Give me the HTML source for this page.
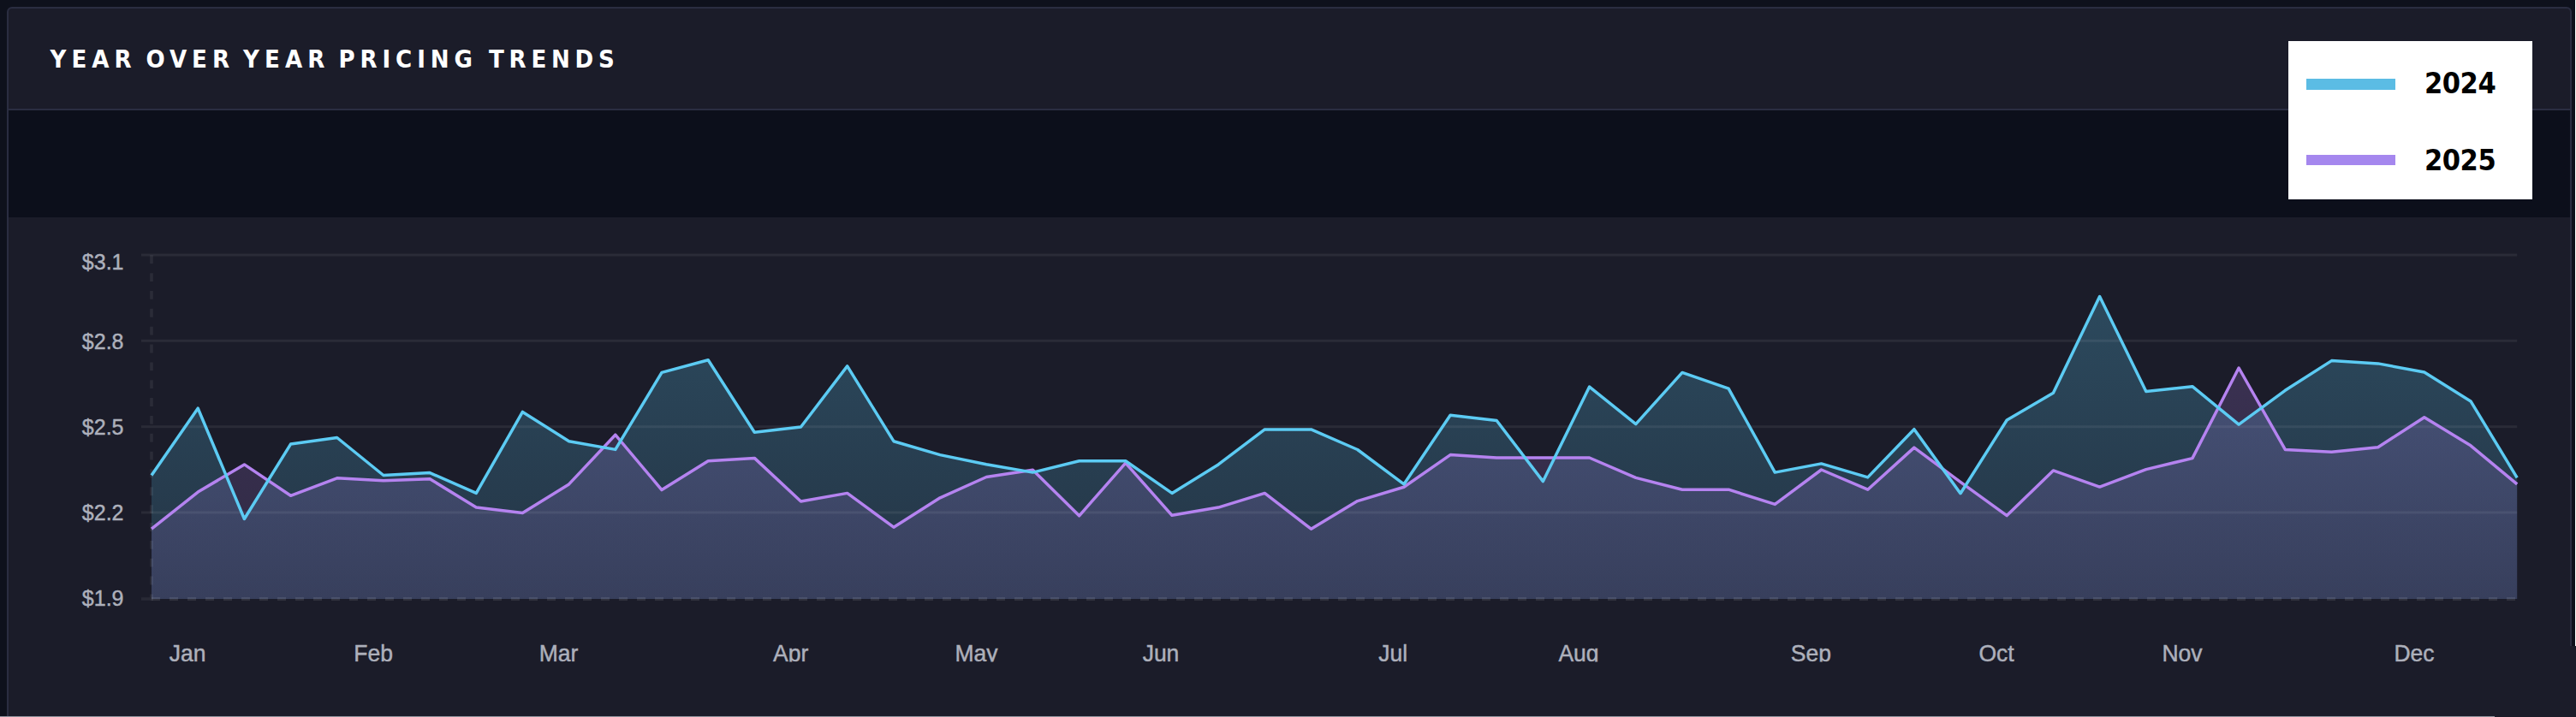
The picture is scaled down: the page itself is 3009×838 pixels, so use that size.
<!DOCTYPE html>
<html><head><meta charset="utf-8"><title>Year Over Year Pricing Trends</title>
<style>
html,body{margin:0;padding:0}
body{width:3009px;height:838px;overflow:hidden;background:#0e111c;position:relative;font-family:"Liberation Sans",sans-serif}
.card{position:absolute;left:8px;top:8px;width:2992px;height:840px;border:2px solid #2a2d41;border-radius:6px 6px 0 0;background:#1b1c29}
.hline{position:absolute;left:10px;top:127px;width:2992px;height:2px;background:#2a2d41}
.band{position:absolute;left:10px;top:129px;width:2992px;height:125px;background:#0c0f1b}
.title{position:absolute;left:0;top:51px;margin:0;width:800px;height:36px;font:bold 29px/36px "DejaVu Sans Condensed","DejaVu Sans","Liberation Sans",sans-serif;color:#fff;white-space:nowrap}
.title span{position:absolute;top:0}
.chart{position:absolute;left:0;top:0}
.yl{font:25px "Liberation Sans",sans-serif;fill:#adb0bb;stroke:#adb0bb;stroke-width:0.45px}
.xl{font:26.5px "Liberation Sans",sans-serif;fill:#adb0bb;stroke:#adb0bb;stroke-width:0.45px}
.legend{position:absolute;left:2673px;top:48px;width:285px;height:185px;background:#fff}
.legend .bar{position:absolute;left:21px;width:103.6px;height:12.5px}
.legend .lb{position:absolute;left:158.9px;font:bold 34px/40px "DejaVu Sans Condensed","Liberation Sans",sans-serif;color:#000;letter-spacing:-0.45px}
.rwhite{position:absolute;left:3008px;top:0;width:1px;height:755px;background:#fff}
.patch{position:absolute;left:2914px;top:755px;width:95px;height:83px;background:#1b1c29}
.bline{position:absolute;left:0;top:837px;width:2914px;height:1px;background:#8f929c}
</style></head><body>
<div class="card"></div>
<div class="hline"></div>
<div class="band"></div>
<h1 class="title"><span style="left:58.5px;letter-spacing:6.07px">YEAR</span> <span style="left:170.5px;letter-spacing:6px">OVER</span> <span style="left:284px;letter-spacing:6.13px">YEAR</span> <span style="left:395.5px;letter-spacing:5.9px">PRICING</span> <span style="left:571px;letter-spacing:5.76px">TRENDS</span></h1>
<svg class="chart" width="3009" height="838" viewBox="0 0 3009 838">
<defs><linearGradient id="gb" gradientUnits="userSpaceOnUse" x1="0" y1="298" x2="0" y2="700"><stop offset="0" stop-color="#5ccbf3" stop-opacity="0.277"/><stop offset="1" stop-color="#5ccbf3" stop-opacity="0.14"/></linearGradient><linearGradient id="gp" gradientUnits="userSpaceOnUse" x1="0" y1="298" x2="0" y2="700"><stop offset="0" stop-color="#b583f0" stop-opacity="0.235"/><stop offset="1" stop-color="#b583f0" stop-opacity="0.135"/></linearGradient><clipPath id="xc"><rect x="0" y="740" width="3009" height="33.5"/></clipPath></defs>
<path d="M177.0,700 L177.0,555.5 L231.2,477.2 L285.4,606.5 L339.5,519.1 L393.7,511.5 L447.9,555.5 L502.1,552.6 L556.3,576.4 L610.4,481.4 L664.6,515.7 L718.8,525.4 L773.0,435.4 L827.2,420.8 L881.3,505.3 L935.5,499.0 L989.7,427.9 L1043.9,515.7 L1098.1,531.6 L1152.2,542.8 L1206.4,552.1 L1260.6,538.7 L1314.8,538.7 L1369.0,576.4 L1423.1,542.9 L1477.3,501.9 L1531.5,501.9 L1585.7,525.5 L1639.9,565.9 L1694.1,485.2 L1748.2,491.5 L1802.4,562.6 L1856.6,452.1 L1910.8,495.6 L1965.0,435.4 L2019.1,454.2 L2073.3,552.1 L2127.5,541.9 L2181.7,557.9 L2235.9,501.7 L2290.0,576.7 L2344.2,491.0 L2398.4,459.3 L2452.6,346.6 L2506.8,457.5 L2560.9,451.7 L2615.1,496.1 L2669.3,456.3 L2723.5,421.6 L2777.7,424.9 L2831.8,435.0 L2886.0,468.9 L2940.2,558.4 L2940.2,700 Z" fill="url(#gb)"/>
<path d="M177.0,700 L177.0,618.2 L231.2,575.1 L285.4,542.9 L339.5,579.3 L393.7,558.8 L447.9,561.8 L502.1,559.7 L556.3,593.1 L610.4,599.4 L664.6,565.9 L718.8,508.2 L773.0,572.6 L827.2,538.7 L881.3,535.4 L935.5,586.0 L989.7,576.4 L1043.9,616.2 L1098.1,581.8 L1152.2,557.5 L1206.4,549.2 L1260.6,602.8 L1314.8,541.2 L1369.0,602.3 L1423.1,593.1 L1477.3,576.4 L1531.5,618.2 L1585.7,585.6 L1639.9,569.3 L1694.1,531.6 L1748.2,535.0 L1802.4,535.0 L1856.6,535.0 L1910.8,558.4 L1965.0,572.2 L2019.1,572.2 L2073.3,589.4 L2127.5,549.0 L2181.7,572.2 L2235.9,523.1 L2290.0,563.3 L2344.2,602.6 L2398.4,549.9 L2452.6,569.1 L2506.8,548.6 L2560.9,535.6 L2615.1,430.0 L2669.3,525.4 L2723.5,528.3 L2777.7,522.8 L2831.8,487.7 L2886.0,520.8 L2940.2,565.9 L2940.2,700 Z" fill="url(#gp)"/>
<rect x="165" y="296.5" width="2775.2" height="3" fill="#ffffff" fill-opacity="0.065"/>
<rect x="165" y="396.8" width="2775.2" height="3" fill="#ffffff" fill-opacity="0.065"/>
<rect x="165" y="497.2" width="2775.2" height="3" fill="#ffffff" fill-opacity="0.065"/>
<rect x="165" y="597.5" width="2775.2" height="3" fill="#ffffff" fill-opacity="0.065"/>
<line x1="177" y1="298.3" x2="177" y2="702" stroke="#ffffff" stroke-opacity="0.07" stroke-width="3.6" stroke-dasharray="9.85 11"/>
<line x1="177" y1="700" x2="2940.2" y2="700" stroke="#ffffff" stroke-opacity="0.095" stroke-width="3.8" stroke-dasharray="10 11"/>
<rect x="165" y="698.2" width="10.3" height="3.6" fill="#ffffff" fill-opacity="0.06"/>
<polyline points="177.0,618.2 231.2,575.1 285.4,542.9 339.5,579.3 393.7,558.8 447.9,561.8 502.1,559.7 556.3,593.1 610.4,599.4 664.6,565.9 718.8,508.2 773.0,572.6 827.2,538.7 881.3,535.4 935.5,586.0 989.7,576.4 1043.9,616.2 1098.1,581.8 1152.2,557.5 1206.4,549.2 1260.6,602.8 1314.8,541.2 1369.0,602.3 1423.1,593.1 1477.3,576.4 1531.5,618.2 1585.7,585.6 1639.9,569.3 1694.1,531.6 1748.2,535.0 1802.4,535.0 1856.6,535.0 1910.8,558.4 1965.0,572.2 2019.1,572.2 2073.3,589.4 2127.5,549.0 2181.7,572.2 2235.9,523.1 2290.0,563.3 2344.2,602.6 2398.4,549.9 2452.6,569.1 2506.8,548.6 2560.9,535.6 2615.1,430.0 2669.3,525.4 2723.5,528.3 2777.7,522.8 2831.8,487.7 2886.0,520.8 2940.2,565.9" fill="none" stroke="#b583f0" stroke-width="3.5" stroke-linejoin="round"/>
<polyline points="177.0,555.5 231.2,477.2 285.4,606.5 339.5,519.1 393.7,511.5 447.9,555.5 502.1,552.6 556.3,576.4 610.4,481.4 664.6,515.7 718.8,525.4 773.0,435.4 827.2,420.8 881.3,505.3 935.5,499.0 989.7,427.9 1043.9,515.7 1098.1,531.6 1152.2,542.8 1206.4,552.1 1260.6,538.7 1314.8,538.7 1369.0,576.4 1423.1,542.9 1477.3,501.9 1531.5,501.9 1585.7,525.5 1639.9,565.9 1694.1,485.2 1748.2,491.5 1802.4,562.6 1856.6,452.1 1910.8,495.6 1965.0,435.4 2019.1,454.2 2073.3,552.1 2127.5,541.9 2181.7,557.9 2235.9,501.7 2290.0,576.7 2344.2,491.0 2398.4,459.3 2452.6,346.6 2506.8,457.5 2560.9,451.7 2615.1,496.1 2669.3,456.3 2723.5,421.6 2777.7,424.9 2831.8,435.0 2886.0,468.9 2940.2,558.4" fill="none" stroke="#5ccbf3" stroke-width="3.5" stroke-linejoin="round"/>
<text class="yl" x="144.5" y="315" text-anchor="end">$3.1</text>
<text class="yl" x="144.5" y="407.7" text-anchor="end">$2.8</text>
<text class="yl" x="144.5" y="507.8" text-anchor="end">$2.5</text>
<text class="yl" x="144.5" y="608.1" text-anchor="end">$2.2</text>
<text class="yl" x="144.5" y="707.5" text-anchor="end">$1.9</text>
<g clip-path="url(#xc)">
<text class="xl" transform="translate(219.1 772.8) scale(1 1.07)" text-anchor="middle">Jan</text>
<text class="xl" transform="translate(436.2 772.8) scale(1 1.07)" text-anchor="middle">Feb</text>
<text class="xl" transform="translate(652.5 772.8) scale(1 1.07)" text-anchor="middle">Mar</text>
<text class="xl" transform="translate(923.7 772.8) scale(1 1.07)" text-anchor="middle">Apr</text>
<text class="xl" transform="translate(1140.5 772.8) scale(1 1.07)" text-anchor="middle">May</text>
<text class="xl" transform="translate(1356 772.8) scale(1 1.07)" text-anchor="middle">Jun</text>
<text class="xl" transform="translate(1627.2 772.8) scale(1 1.07)" text-anchor="middle">Jul</text>
<text class="xl" transform="translate(1844 772.8) scale(1 1.07)" text-anchor="middle">Aug</text>
<text class="xl" transform="translate(2115.4 772.8) scale(1 1.07)" text-anchor="middle">Sep</text>
<text class="xl" transform="translate(2332 772.8) scale(1 1.07)" text-anchor="middle">Oct</text>
<text class="xl" transform="translate(2549 772.8) scale(1 1.07)" text-anchor="middle">Nov</text>
<text class="xl" transform="translate(2820 772.8) scale(1 1.07)" text-anchor="middle">Dec</text>
</g>
</svg>
<div class="legend">
<div class="bar" style="top:44px;background:#5bbce4"></div><div class="lb" style="top:29px">2024</div>
<div class="bar" style="top:132.5px;height:12.1px;background:#a587ee"></div><div class="lb" style="top:118.7px">2025</div>
</div>
<div class="rwhite"></div>
<div class="patch"></div>
<div class="bline"></div>
</body></html>
